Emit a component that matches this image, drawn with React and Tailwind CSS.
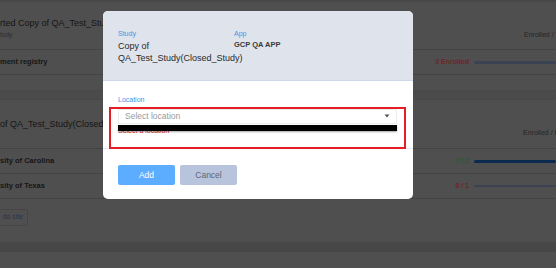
import { useState } from "react";

const font = "font-['Liberation_Sans',Arial,sans-serif]";

function SiteRow({ name, count, countColor, barColor, barHeight }) {
  return (
    <div className="flex h-[25px] items-center border-b border-[#444]">
      <div className="flex-1 text-[7.5px] font-semibold text-[#161616] whitespace-nowrap">{name}</div>
      <div className={`w-[40px] text-right text-[7px] font-semibold ${countColor}`}>{count}</div>
      <div className={`ml-[5px] flex-1 max-w-[82px] rounded-full ${barColor} ${barHeight}`} />
    </div>
  );
}

export default function App() {
  const [location] = useState("");

  return (
    <div className={`relative h-[268px] w-[556px] overflow-hidden bg-[#4f4f4f] ${font}`}>
      {/* page behind the backdrop */}
      <div className="h-[2px] bg-[#474747]" />

      {/* first study card */}
      <div className="flex h-[48px] items-end justify-between border-b border-[#444] pb-[10px]">
        <div>
          <div className="text-[9px] leading-[11px] font-medium text-[#151515] whitespace-nowrap">
            rted Copy of QA_Test_Study(Closed_Study)
          </div>
          <div className="mt-[1px] text-[6.5px] leading-[9px] text-[#2e2e2e]">tudy</div>
        </div>
        <div className="w-[32px] text-[7px] leading-[9px] text-[#252525] whitespace-nowrap">Enrolled / Target</div>
      </div>
      <SiteRow name="ment registry" count="3 Enrolled" countColor="text-[#6a2727]" barColor="bg-[#3b4352]" barHeight="h-[3px]" />
      <div className="h-[15px]" />
      <div className="h-[10px] border-y border-[#484848] bg-[#4b4b4b]" />

      {/* second study card */}
      <div className="flex h-[49px] justify-between border-b border-[#444]">
        <div className="self-center text-[9px] leading-[11px] font-medium text-[#151515] whitespace-nowrap">
          of QA_Test_Study(Closed_Study)
        </div>
        <div className="w-[33px] self-end pb-[11px] text-[7px] leading-[9px] text-[#252525] whitespace-nowrap">
          Enrolled / Invited
        </div>
      </div>
      <SiteRow name="sity of Carolina" count="2 / 2" countColor="text-[#2d5a2d]" barColor="bg-[#0c2a4f]" barHeight="h-[3px]" />
      <SiteRow name="sity of Texas" count="0 / 1" countColor="text-[#6a2727]" barColor="bg-[#3b4352]" barHeight="h-[2px]" />
      <div className="h-[43px] pt-[10px]">
        <div className="-ml-[10px] flex h-[17px] w-[38px] items-center justify-end rounded-[2px] border border-[#454545] pr-[4px] text-[7px] text-[#2b3450]">
          dd site
        </div>
      </div>
      <div className="h-[10px] border-t border-[#474747] bg-[#474747]" />

      {/* modal */}
      <div className="absolute left-[103px] top-[11px] w-[310px] overflow-hidden rounded-[5px] bg-white">
        <div className="flex border-b border-[#cdd9ea] bg-[#dfe3eb] pb-[15px] pl-[15px] pt-[19px]">
          <div className="w-[116px]">
            <div className="text-[7px] leading-[8px] font-medium text-[#4a8fe8]">Study</div>
            <div className="mt-[1.5px] text-[9px] leading-[12.5px] text-[#2a2a2a]">
              Copy of QA_Test_Study(Closed_Study)
            </div>
          </div>
          <div>
            <div className="text-[7px] leading-[8px] font-medium text-[#4a8fe8]">App</div>
            <div className="mt-[2px] text-[7.5px] leading-[10px] font-semibold text-[#3a3a3a]">GCP QA APP</div>
          </div>
        </div>

        <div className="relative px-[15px] pb-[13px] pt-[15px]">
          <div className="text-[7px] leading-[8px] font-medium text-[#4a8fe8]">Location</div>
          <div className="mt-[5px] flex h-[15px] w-[279px] items-center justify-between border border-[#ececec] pl-[6px] pr-[6px]">
            <span className="text-[8.5px] text-[#9a9a9a]">{location || "Select location"}</span>
            <svg width="6" height="4" viewBox="0 0 6 4">
              <path d="M0.5 0.5 L5.5 0.5 L3 3.5 Z" fill="#555" />
            </svg>
          </div>
          <div className="mt-[3.5px] text-[7px] leading-[8px] text-[#d9262b]">Select a location</div>
          {/* redacted dropdown */}
          <div className="absolute left-[15px] top-[44px] h-[6.5px] w-[279px] bg-black shadow-[0_1px_2px_rgba(0,0,0,0.35)]" />
        </div>

        <div className="flex gap-[5px] border-t border-[#e6ebf2] px-[15px] pb-[14px] pt-[16px]">
          <button className="h-[20px] w-[57px] rounded-[2px] bg-[#5cacff] text-[8.5px] text-white">Add</button>
          <button className="h-[20px] w-[57px] rounded-[2px] bg-[#b7c4dc] text-[8.5px] text-[#5d6778]">Cancel</button>
        </div>

        {/* annotation box */}
        <div className="absolute left-[6px] top-[96px] h-[42px] w-[297px] border-2 border-[#e31e24]" />
      </div>
    </div>
  );
}
